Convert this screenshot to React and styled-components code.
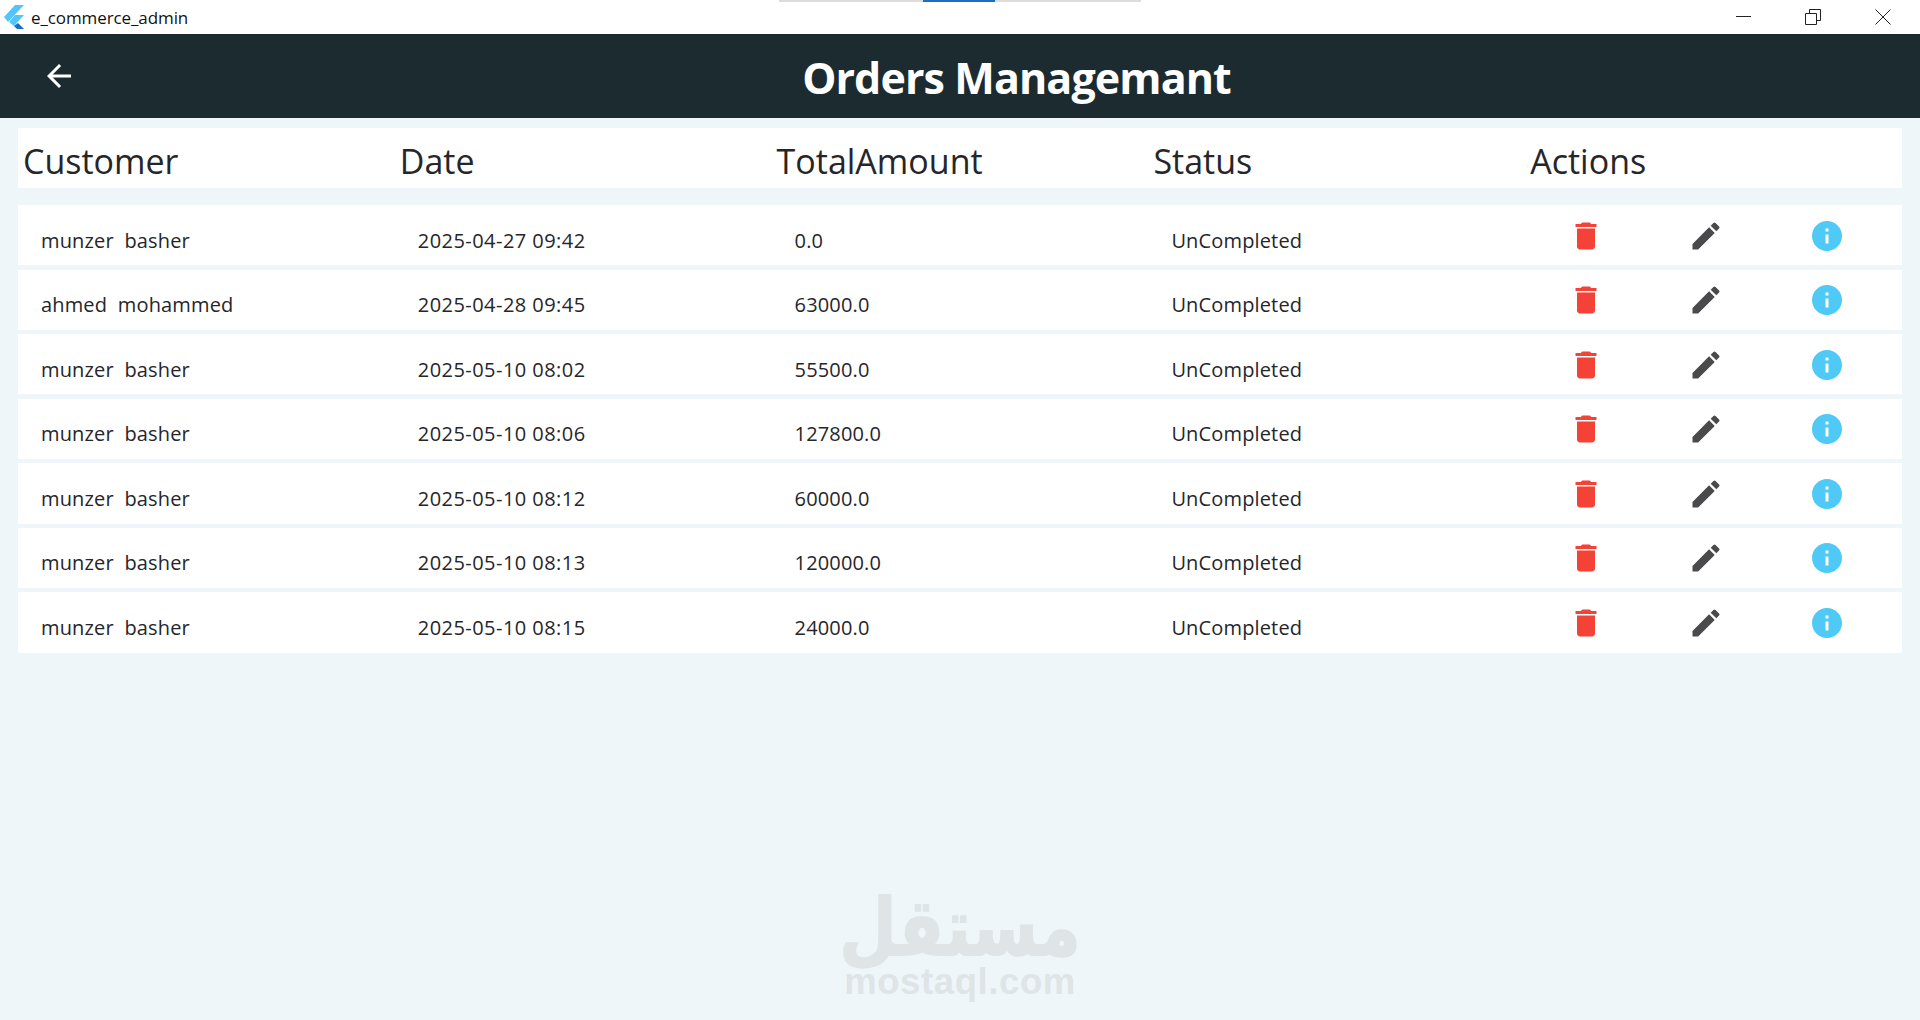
import styled, { createGlobalStyle } from "styled-components";
import { MdArrowBack, MdDelete, MdEdit, MdInfo } from "react-icons/md";

const orders = [
  { customer: "munzer  basher", date: "2025-04-27 09:42", total: "0.0" },
  { customer: "ahmed  mohammed", date: "2025-04-28 09:45", total: "63000.0" },
  { customer: "munzer  basher", date: "2025-05-10 08:02", total: "55500.0" },
  { customer: "munzer  basher", date: "2025-05-10 08:06", total: "127800.0" },
  { customer: "munzer  basher", date: "2025-05-10 08:12", total: "60000.0" },
  { customer: "munzer  basher", date: "2025-05-10 08:13", total: "120000.0" },
  { customer: "munzer  basher", date: "2025-05-10 08:15", total: "24000.0" },
];

const columns = ["Customer", "Date", "TotalAmount", "Status", "Actions"];

const GlobalStyle = createGlobalStyle`
  html, body {
    margin: 0;
    height: 100%;
    background: #eef6f9;
  }
  #root {
    height: 100%;
  }
`;

const Page = styled.div`
  position: relative;
  height: 1020px;
  overflow: hidden;
  background: #eef6f9;
  font-family: "Open Sans", "Noto Sans", sans-serif;
  color: #26262a;
`;

const TitleBar = styled.div`
  position: relative;
  display: flex;
  align-items: center;
  height: 34px;
  padding-left: 4px;
  background: #fff;
`;

const AppName = styled.span`
  margin-left: 5px;
  font-size: 17px;
  letter-spacing: -0.1px;
  color: #111;
`;

const TaskStrip = styled.div`
  position: absolute;
  top: 0;
  left: 779px;
  width: 362px;
  height: 2px;
  background: linear-gradient(90deg, #dcdedd 0 144px, #1a6fc4 144px 216px, #dcdedd 216px);
`;

const WindowControls = styled.div`
  display: flex;
  align-items: center;
  gap: 54px;
  margin-left: auto;
  padding-right: 29px;
`;

const AppBar = styled.header`
  display: flex;
  align-items: center;
  height: 84px;
  background: #1c2b30;
  color: #fff;
`;

const BackButton = styled.div`
  display: flex;
  align-items: center;
  flex: 0 0 113px;
  padding: 0 0 0 41px;
  box-sizing: border-box;
  font-size: 36px;
`;

const Title = styled.h1`
  flex: 1;
  margin: 0;
  padding-top: 2px;
  text-align: center;
  font-size: 43px;
  font-weight: 700;
  letter-spacing: -0.9px;
`;

const Table = styled.section`
  display: flex;
  flex-direction: column;
  padding: 10px 18px 0;
`;

const HeaderRow = styled.div`
  display: grid;
  grid-template-columns: repeat(4, 376.8px) 1fr;
  align-items: center;
  height: 60px;
  margin-bottom: 17px;
  padding-left: 5px;
  background: #fff;
`;

const HeaderCell = styled.div`
  font-size: 34px;
  letter-spacing: 0;
  padding-top: 6px;
`;

const Rows = styled.div`
  display: flex;
  flex-direction: column;
  gap: 4.4px;
`;

const Row = styled.div`
  display: grid;
  grid-template-columns: repeat(4, 376.8px) 1fr;
  align-items: center;
  height: 60.2px;
  padding-left: 23px;
  background: #fff;
`;

const Cell = styled.div`
  font-size: 20px;
  letter-spacing: ${(props) => (props.$wide ? "0.45px" : "0.15px")};
  padding-top: 10px;
  white-space: pre;
`;

const Actions = styled.div`
  display: flex;
  align-items: center;
  gap: 84.5px;
  padding: 1px 0 0 19.5px;
  font-size: 36px;
  line-height: 0;
`;

const ActionIcon = styled.span`
  display: inline-flex;
  color: ${(props) => props.$color};
`;

const Watermark = styled.div`
  position: absolute;
  left: 0;
  right: 0;
  top: 897px;
  display: flex;
  flex-direction: column;
  align-items: center;
  color: #dfe4e6;
`;

const WatermarkArabic = styled.div`
  margin-bottom: 7px;
  font-family: "DejaVu Sans", sans-serif;
  font-size: 66px;
  font-weight: 700;
  line-height: 64px;
  -webkit-text-stroke: 1.5px #dfe4e6;
  transform: scaleY(1.2);
`;

const WatermarkLatin = styled.div`
  font-family: "Liberation Sans", sans-serif;
  font-size: 36.5px;
  font-weight: 700;
  line-height: 28px;
  letter-spacing: 0.6px;
`;

function FlutterLogo() {
  return (
    <svg width="22" height="26" viewBox="0 0 22 26">
      <path d="M20 1h-9L0 13l4 5z" fill="#54c5f8" />
      <path d="M20 11h-9l-6 7 5 4z" fill="#54c5f8" />
      <path d="M10 22l4-3 6 6h-7z" fill="#1a6fc4" />
    </svg>
  );
}

function MinimizeIcon() {
  return (
    <svg width="15" height="16" viewBox="0 0 15 16">
      <path d="M0 7.5h15" stroke="#222" strokeWidth="1" fill="none" />
    </svg>
  );
}

function RestoreIcon() {
  return (
    <svg width="16" height="16" viewBox="0 0 16 16">
      <path d="M.5 4.5h11v11H.5zM4.5 4.5V.5h11v11h-4" stroke="#222" strokeWidth="1" fill="none" />
    </svg>
  );
}

function CloseIcon() {
  return (
    <svg width="16" height="16" viewBox="0 0 16 16">
      <path d="M.5.5l15 15M15.5.5l-15 15" stroke="#222" strokeWidth="1" fill="none" />
    </svg>
  );
}

export default function App() {
  return (
    <>
      <GlobalStyle />
      <Page>
        <TitleBar>
          <FlutterLogo />
          <AppName>e_commerce_admin</AppName>
          <TaskStrip />
          <WindowControls>
            <MinimizeIcon />
            <RestoreIcon />
            <CloseIcon />
          </WindowControls>
        </TitleBar>
        <AppBar>
          <BackButton>
            <MdArrowBack />
          </BackButton>
          <Title>Orders Managemant</Title>
        </AppBar>
        <Table>
          <HeaderRow>
            {columns.map((name) => (
              <HeaderCell key={name}>{name}</HeaderCell>
            ))}
          </HeaderRow>
          <Rows>
            {orders.map((order) => (
              <Row key={order.date}>
                <Cell>{order.customer}</Cell>
                <Cell $wide>{order.date}</Cell>
                <Cell>{order.total}</Cell>
                <Cell>UnCompleted</Cell>
                <Actions>
                  <ActionIcon $color="#f44336"><MdDelete /></ActionIcon>
                  <ActionIcon $color="#4a4a4d"><MdEdit /></ActionIcon>
                  <ActionIcon $color="#4fc9f5"><MdInfo /></ActionIcon>
                </Actions>
              </Row>
            ))}
          </Rows>
        </Table>
        <Watermark>
          <WatermarkArabic>مستقل</WatermarkArabic>
          <WatermarkLatin>mostaql.com</WatermarkLatin>
        </Watermark>
      </Page>
    </>
  );
}
